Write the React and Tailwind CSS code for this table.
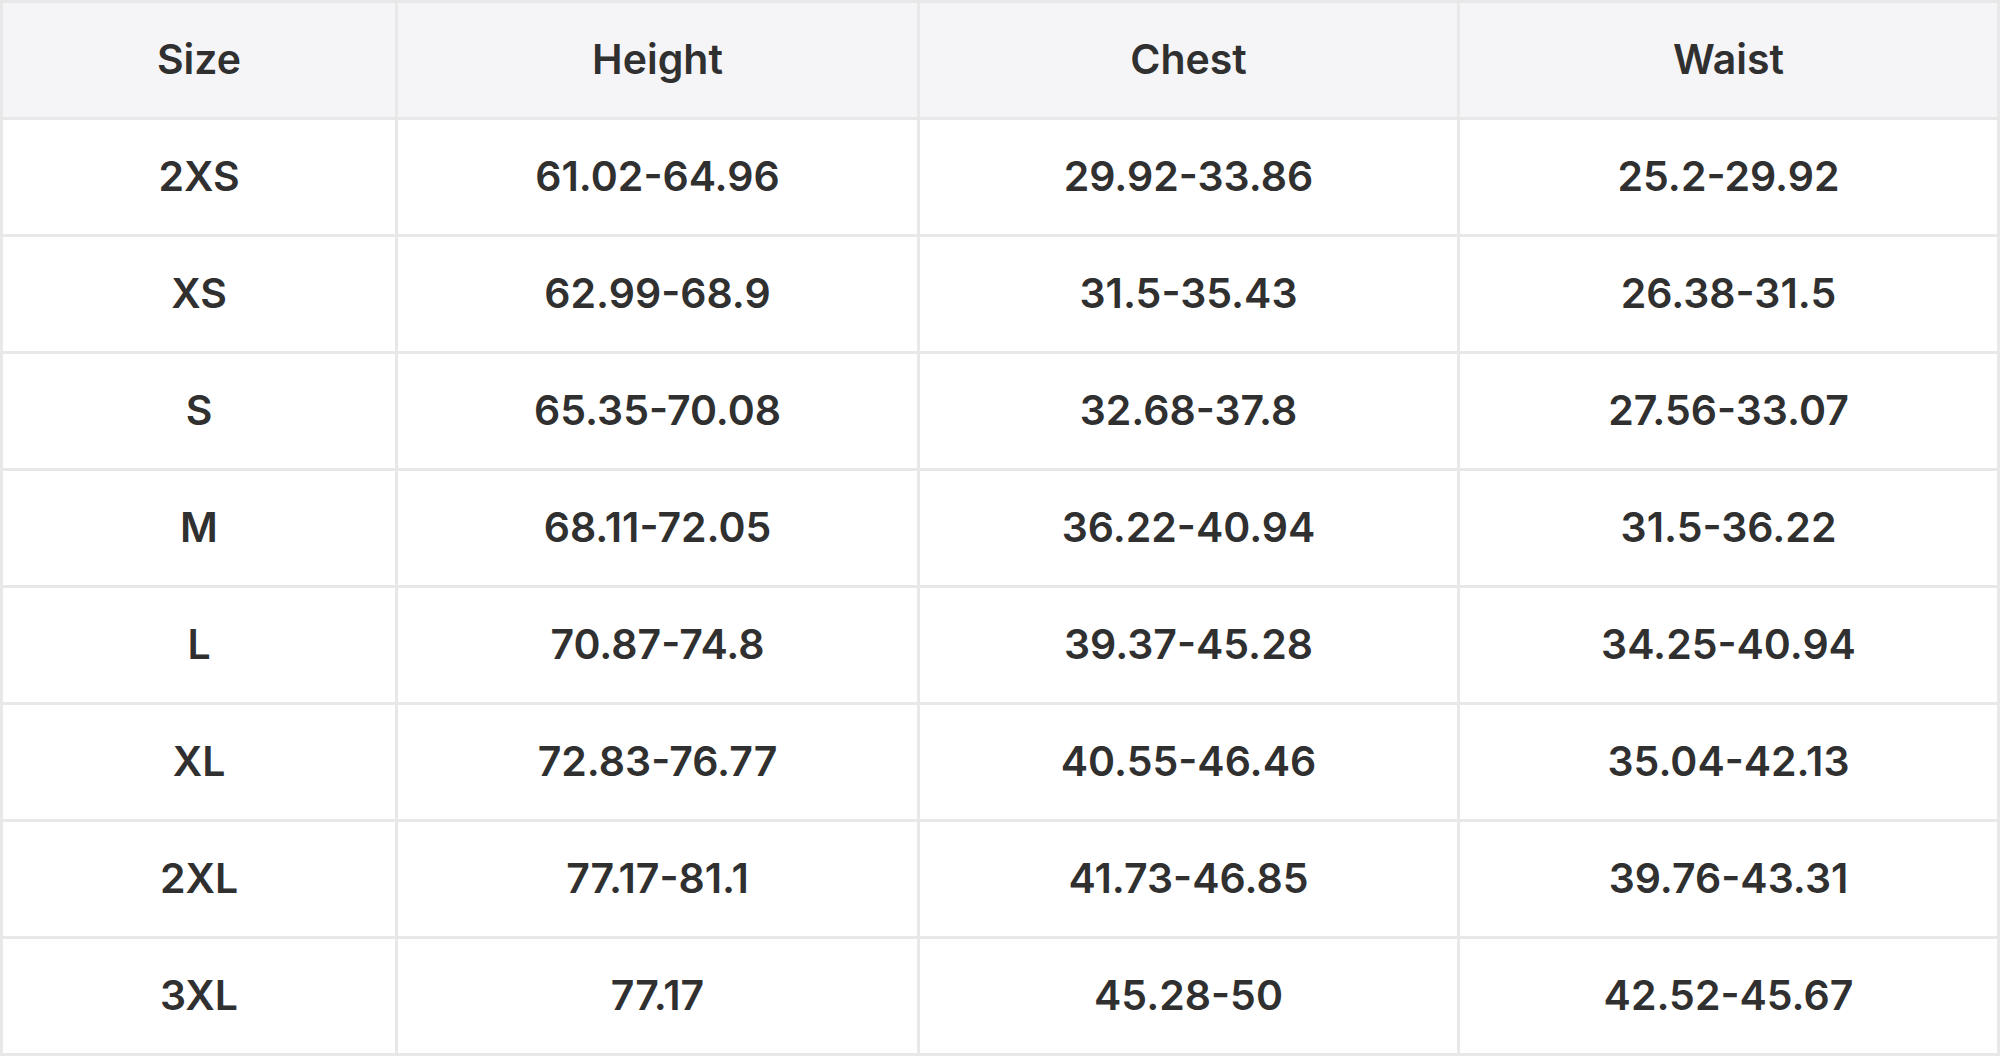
import React from "react";

const rows = [
  ["2XS", "61.02-64.96", "29.92-33.86", "25.2-29.92"],
  ["XS", "62.99-68.9", "31.5-35.43", "26.38-31.5"],
  ["S", "65.35-70.08", "32.68-37.8", "27.56-33.07"],
  ["M", "68.11-72.05", "36.22-40.94", "31.5-36.22"],
  ["L", "70.87-74.8", "39.37-45.28", "34.25-40.94"],
  ["XL", "72.83-76.77", "40.55-46.46", "35.04-42.13"],
  ["2XL", "77.17-81.1", "41.73-46.85", "39.76-43.31"],
  ["3XL", "77.17", "45.28-50", "42.52-45.67"],
];

const head = ["Size", "Height", "Chest", "Waist"];

export default function App() {
  return (
    <div className="w-[2000px] h-[1056px] bg-white" style={{ fontFamily: "Inter, 'Noto Sans', sans-serif" }}>
      <div className="grid grid-cols-[392px_519px_537px_537px] gap-[3px] bg-[#e8e8e8] p-[3px] text-[#303030] text-[41px] font-semibold">
        {head.map((h) => (
          <div key={h} className="h-[114px] bg-[#f5f5f7] flex items-center justify-center">
            {h}
          </div>
        ))}
        {rows.map((r) =>
          r.map((c, i) => (
            <div key={r[0] + i} className="h-[114px] bg-white flex items-center justify-center">
              {c}
            </div>
          ))
        )}
      </div>
    </div>
  );
}
